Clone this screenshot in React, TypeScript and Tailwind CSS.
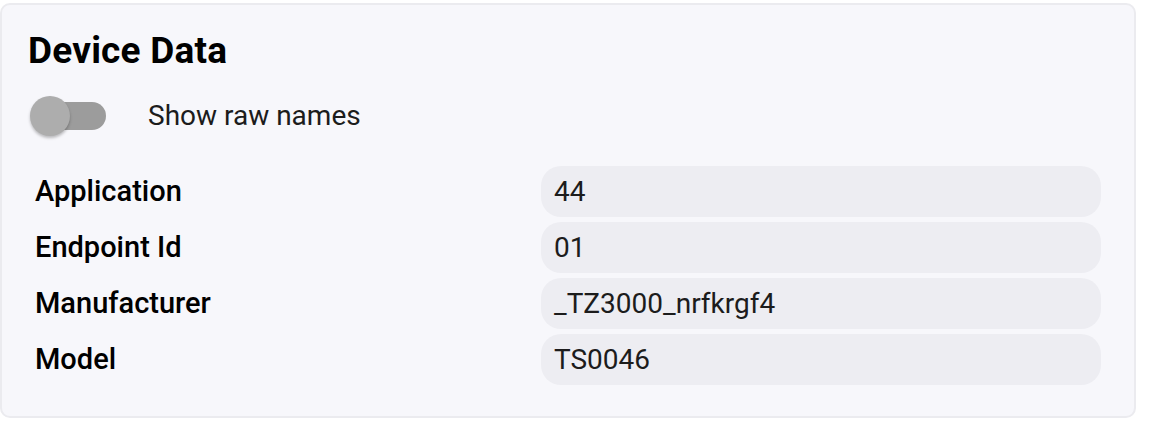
import React from "react";

const rows: [string, string][] = [
  ["Application", "44"],
  ["Endpoint Id", "01"],
  ["Manufacturer", "_TZ3000_nrfkrgf4"],
  ["Model", "TS0046"],
];

export default function App() {
  return (
    <div className="w-[1164px] h-[422px] bg-white pt-[3px]" style={{ fontFamily: "Roboto, 'Noto Sans', sans-serif" }}>
      <div className="w-[1136px] rounded-[10px] border-2 border-[#ebebef] bg-[#f7f7fb] pl-[26px] pr-[32px] pt-[26px] pb-[31px]">
        <h2 className="text-[37px] leading-[40px] font-bold text-black tracking-[0.2px]">Device Data</h2>
        <div className="mt-[21px] flex h-[48px] items-center">
          <div className="relative ml-[8px] h-[28px] w-[70px] rounded-full bg-[#9c9c9c]">
            <div className="absolute left-[-6px] top-[-6px] h-[40px] w-[40px] rounded-full bg-[#adadad] shadow-[0_2px_3px_rgba(0,0,0,0.25)]" />
          </div>
          <span className="ml-[42px] text-[28px] text-[#1c1c1c]">Show raw names</span>
        </div>
        <div className="mt-[26px] flex flex-col gap-[5px] pl-[7px]">
          {rows.map(([k, v]) => (
            <div key={k} className="grid grid-cols-[506px_560px] items-center">
              <div className="text-[29px] font-medium text-black">{k}</div>
              <div className="flex h-[51px] items-center rounded-[20px] bg-[#ededf2] px-[13px] text-[28px] text-[#1c1c1c]">
                {v}
              </div>
            </div>
          ))}
        </div>
      </div>
    </div>
  );
}
